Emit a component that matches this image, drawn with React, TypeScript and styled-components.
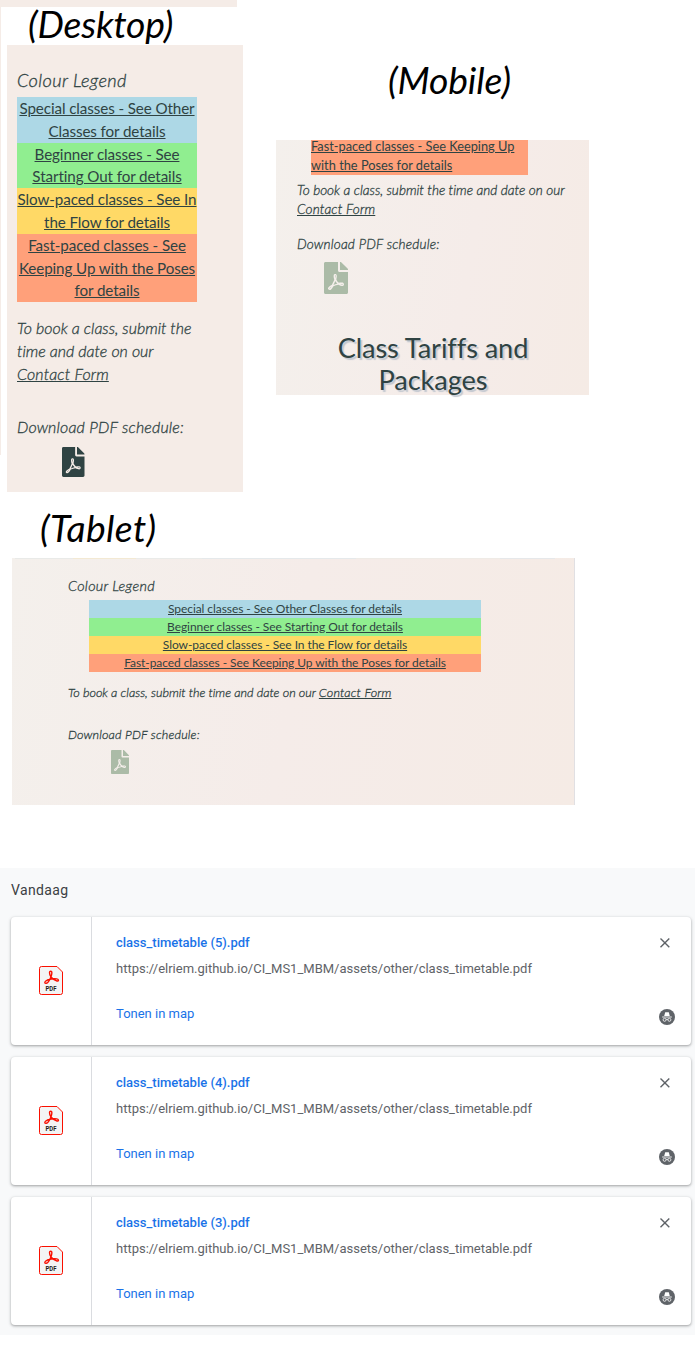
import React from "react";
import styled, { createGlobalStyle } from "styled-components";
import { FaFilePdf } from "react-icons/fa";

const GlobalStyle = createGlobalStyle`
  * { box-sizing: border-box; }
  body { margin: 0; background: #fff; }
`;

const Page = styled.main`
  width: 696px;
  height: 1348px;
  overflow: hidden;
  display: flex;
  flex-direction: column;
  background: #fff;
  font-family: Lato, "Liberation Sans", sans-serif;
  font-variant-ligatures: none;
  color: #2f4343;
`;

const Previews = styled.section`
  display: flex;
  height: 492px;
`;

const DesktopColumn = styled.div`
  width: 276px;
`;

const EdgeStrip = styled.div`
  width: 237px;
  height: 7px;
  background: #f5ece7;
`;

const DesktopRow = styled.div`
  display: flex;
  gap: 6px;
`;

const EdgeLine = styled.div`
  width: 1px;
  height: 448px;
  background: #f5ece7;
`;

const DeviceTitle = styled.h2<{ $height: number; $line: number; $indent: number; $spacing?: number }>`
  margin: 0;
  height: ${(p) => p.$height}px;
  line-height: ${(p) => p.$line}px;
  padding-left: ${(p) => p.$indent}px;
  font-size: 37.33px;
  font-weight: 400;
  font-style: italic;
  color: #000;
  white-space: nowrap;
  letter-spacing: ${(p) => p.$spacing ?? 0}px;
`;

const DesktopPanel = styled.div`
  width: 236px;
  height: 447px;
  padding: 21px 0 0 10px;
  background: #f5ece7;
`;

const MobilePanel = styled.div`
  width: 313px;
  height: 255px;
  padding: 0 0 0 21px;
  background: linear-gradient(100deg, #f4f0ec, #f5ece9 60%, #f5ebe5);
`;

const TabletSection = styled.section`
  height: 376px;
`;

const TabletPanel = styled.div`
  width: 563px;
  height: 247px;
  margin-left: 12px;
  border-right: 1px solid #e1e0e3;
  background: linear-gradient(100deg, #f4f0ec, #f5ece9 50%, #f5ebe5);
`;

const TableEdge = styled.div`
  display: flex;
  height: 1px;
  margin-left: 3px;
  width: 540px;
`;

const TableEdgeCell = styled.div<{ $width: number; $color: string }>`
  width: ${(p) => p.$width}px;
  background: ${(p) => p.$color};
`;

const TabletBody = styled.div`
  padding: 16px 0 0 56px;
`;

const Heading = styled.h3<{ $size: number; $line: number; $spacing?: number; $gap?: number }>`
  margin: 0 0 ${(p) => p.$gap ?? 0}px;
  font-size: ${(p) => p.$size}px;
  line-height: ${(p) => p.$line}px;
  font-weight: 300;
  -webkit-text-stroke: 0.3px currentColor;
  font-style: italic;
  letter-spacing: ${(p) => p.$spacing ?? 0}px;
`;

const Legend = styled.div<{ $width: number; $size: number; $line: number; $indent?: number; $left?: boolean; $spacing?: number }>`
  width: ${(p) => p.$width}px;
  margin-left: ${(p) => p.$indent ?? 0}px;
  font-size: ${(p) => p.$size}px;
  line-height: ${(p) => p.$line}px;
  text-align: ${(p) => (p.$left ? "left" : "center")};
  letter-spacing: ${(p) => p.$spacing ?? 0}px;
  white-space: nowrap;
`;

const LegendItem = styled.div<{ $color: string }>`
  background: ${(p) => p.$color};
  text-decoration: underline;
`;

const ShortLine = styled.div`
  line-height: 13.2px;
  margin-bottom: 2.6px;
`;

const Note = styled.p<{ $size: number; $line: number; $top: number; $spacing?: number }>`
  margin: ${(p) => p.$top}px 0 0;
  font-size: ${(p) => p.$size}px;
  line-height: ${(p) => p.$line}px;
  font-weight: 300;
  -webkit-text-stroke: 0.3px currentColor;
  font-style: italic;
  white-space: nowrap;
  letter-spacing: ${(p) => p.$spacing ?? 0}px;
`;

const Link = styled.span`
  text-decoration: underline;
  letter-spacing: 0.15px;
`;

const PdfGlyph = styled(FaFilePdf)<{ $height: number; $left: number; $top: number; $color: string }>`
  display: block;
  width: ${(p) => p.$height * 0.75}px;
  height: ${(p) => p.$height}px;
  margin: ${(p) => p.$top}px 0 0 ${(p) => p.$left}px;
  color: ${(p) => p.$color};
`;

const TariffHeading = styled.h2`
  margin: 38px 20px 0 0;
  font-size: 27.2px;
  line-height: 32px;
  font-weight: 400;
  letter-spacing: -0.1px;
  text-align: center;
  text-shadow: 2px 2px 1px #c3c8d0;
`;

const Downloads = styled.section`
  width: 695px;
  height: 467px;
  padding: 0 4px 0 11px;
  background: #f8f9fa;
  font-family: Roboto, "Liberation Sans", sans-serif;
`;

const DayLabel = styled.div`
  height: 49px;
  line-height: 45px;
  font-size: 14px;
  letter-spacing: 0.35px;
  color: #3c4043;
`;

const CardList = styled.div`
  display: flex;
  flex-direction: column;
  gap: 12px;
`;

const Card = styled.article`
  display: flex;
  height: 128px;
  border-radius: 4px;
  background: #fff;
  box-shadow: 0 1px 2px rgba(60, 64, 67, 0.3), 0 1px 3px 1px rgba(60, 64, 67, 0.15);
`;

const FileIconPane = styled.div`
  width: 81px;
  display: flex;
  align-items: center;
  justify-content: center;
  padding-bottom: 1px;
  border-right: 1px solid #dadce0;
`;

const CardText = styled.div`
  flex: 1;
  padding: 16px 0 0 24px;
  font-size: 13px;
  line-height: 20px;
`;

const FileName = styled.div`
  font-weight: 500;
  color: #1a73e8;
`;

const FileUrl = styled.div`
  margin-top: 6px;
  color: #5f6368;
`;

const ShowInFolder = styled.div`
  margin-top: 25px;
  color: #1a73e8;
`;

const CardActions = styled.div`
  width: 32px;
  padding: 20px 0;
  display: flex;
  flex-direction: column;
  justify-content: space-between;
`;

const COLORS = { special: "#add8e6", beginner: "#90ee90", slow: "#ffd966", fast: "#ffa07a" };

const PdfFileIcon = () => (
  <svg width="24" height="29" viewBox="0 0 24 29" fill="none">
    <path d="M2.5 .5H18L23.5 6V26.5a2 2 0 0 1-2 2H2.5a2 2 0 0 1-2-2V2.5a2 2 0 0 1 2-2Z" fill="#f4f4f4" stroke="#fa0f00" />
    <path
      d="M11.8 10.7C10.3 8 10 5.2 11.7 5.2s1.3 3 .2 5.7c-1 2.5-2.8 6-4.7 6.4-1.6.2-2-1.2-.4-2.3 2.5-1.7 8-2.8 11-2.1 2.4.6 2 2.5.1 2.1-2.2-.4-4.6-2.3-6.1-4.3Z"
      stroke="#fa0f00"
      strokeWidth="1.4"
      strokeLinejoin="round"
    />
    <text x="12" y="25.2" textAnchor="middle" fontFamily="Roboto, sans-serif" fontSize="6.5" fontWeight="700" fill="#1c1c1c" textLength="11" lengthAdjust="spacingAndGlyphs">
      PDF
    </text>
  </svg>
);

const CloseIcon = () => (
  <svg width="12" height="12" viewBox="0 0 12 12" fill="none" stroke="#5f6368" strokeWidth="1.4">
    <path d="M1.5 1.5 10.3 10.3M10.3 1.5 1.5 10.3" />
  </svg>
);

const IncognitoIcon = () => (
  <svg width="16" height="16" viewBox="0 0 16 16">
    <circle cx="8" cy="8" r="8" fill="#5f6368" />
    <path d="M6.2 3.2h3.6L10.8 7H5.2Z" fill="#fff" />
    <path d="M3.2 8h9.6" stroke="#fff" strokeWidth=".9" />
    <g fill="none" stroke="#fff" strokeWidth=".8">
      <circle cx="5.6" cy="10.8" r="1.5" />
      <circle cx="10.4" cy="10.8" r="1.5" />
      <path d="M7 10.5q1-.7 2 0" />
    </g>
  </svg>
);

const DownloadCard = ({ index }: { index: number }) => (
  <Card>
    <FileIconPane>
      <PdfFileIcon />
    </FileIconPane>
    <CardText>
      <FileName>class_timetable ({index}).pdf</FileName>
      <FileUrl>https://elriem.github.io/CI_MS1_MBM/assets/other/class_timetable.pdf</FileUrl>
      <ShowInFolder>Tonen in map</ShowInFolder>
    </CardText>
    <CardActions>
      <CloseIcon />
      <IncognitoIcon />
    </CardActions>
  </Card>
);

const MobileColumn = styled.div`
  width: 313px;
  padding-top: 56px;
`;

export default function App() {
  return (
    <Page>
      <GlobalStyle />
      <Previews>
        <DesktopColumn>
          <EdgeStrip />
          <DesktopRow>
            <EdgeLine />
            <div>
              <DeviceTitle $height={38} $line={34} $indent={21} $spacing={-0.2}>(Desktop)</DeviceTitle>
              <DesktopPanel>
                <Heading $size={18.2} $line={29} $spacing={0.38} $gap={2}>Colour Legend</Heading>
                <Legend $width={180} $size={15.2} $line={22.8} $spacing={-0.1}>
                  <LegendItem $color={COLORS.special}>Special classes - See Other<br />Classes for details</LegendItem>
                  <LegendItem $color={COLORS.beginner}>Beginner classes - See<br />Starting Out for details</LegendItem>
                  <LegendItem $color={COLORS.slow}>Slow-paced classes - See In<br />the Flow for details</LegendItem>
                  <LegendItem $color={COLORS.fast}>Fast-paced classes - See<br />Keeping Up with the Poses<br />for details</LegendItem>
                </Legend>
                <Note $size={16} $line={22.8} $top={15}>
                  To book a class, submit the<br />time and date on our<br /><Link>Contact Form</Link>
                </Note>
                <Note $size={16} $line={22.8} $top={30} $spacing={0.17}>Download PDF schedule:</Note>
                <PdfGlyph $height={30} $left={45} $top={8.6} $color="#2f4343" />
              </DesktopPanel>
            </div>
          </DesktopRow>
        </DesktopColumn>
        <MobileColumn>
          <DeviceTitle $height={84} $line={48} $indent={112} $spacing={-0.15}>(Mobile)</DeviceTitle>
          <MobilePanel>
            <Legend $width={217} $size={12.8} $line={19.2} $indent={14} $left>
              <LegendItem $color={COLORS.fast}>
                <ShortLine>Fast-paced classes - See Keeping Up</ShortLine>
                <div>with the Poses for details</div>
              </LegendItem>
            </Legend>
            <Note $size={13.6} $line={19.2} $top={6}>
              To book a class, submit the time and date on our<br /><Link>Contact Form</Link>
            </Note>
            <Note $size={13.6} $line={19.2} $top={15.6} $spacing={0.18}>Download PDF schedule:</Note>
            <PdfGlyph $height={32} $left={27} $top={7.4} $color="#abbba7" />
            <TariffHeading>Class Tariffs and<br />Packages</TariffHeading>
          </MobilePanel>
        </MobileColumn>
      </Previews>
      <TabletSection>
        <DeviceTitle $height={66} $line={72} $indent={40} $spacing={0.35}>(Tablet)</DeviceTitle>
        <TabletPanel>
          <TableEdge>
            <TableEdgeCell $width={58} $color="#e9eae8" />
            <TableEdgeCell $width={63} $color="#f3e9d3" />
            <TableEdgeCell $width={66} $color="#eaebe9" />
            <TableEdgeCell $width={154} $color="#e5e9eb" />
            <TableEdgeCell $width={144} $color="#efebe6" />
            <TableEdgeCell $width={55} $color="#e6e8ea" />
          </TableEdge>
          <TabletBody>
            <Heading $size={14.4} $line={22} $spacing={0.3} $gap={2.5}>Colour Legend</Heading>
            <Legend $width={392} $size={12} $line={18} $indent={21} $spacing={-0.07}>
              <LegendItem $color={COLORS.special}>Special classes - See Other Classes for details</LegendItem>
              <LegendItem $color={COLORS.beginner}>Beginner classes - See Starting Out for details</LegendItem>
              <LegendItem $color={COLORS.slow}>Slow-paced classes - See In the Flow for details</LegendItem>
              <LegendItem $color={COLORS.fast}>Fast-paced classes - See Keeping Up with the Poses for details</LegendItem>
            </Legend>
            <Note $size={12.6} $line={18} $top={12.5}>
              To book a class, submit the time and date on our <Link>Contact Form</Link>
            </Note>
            <Note $size={12.6} $line={18} $top={24} $spacing={0.15}>Download PDF schedule:</Note>
            <PdfGlyph $height={24} $left={43} $top={6} $color="#abbba7" />
          </TabletBody>
        </TabletPanel>
      </TabletSection>
      <Downloads>
        <DayLabel>Vandaag</DayLabel>
        <CardList>
          {[5, 4, 3].map((n) => (
            <DownloadCard key={n} index={n} />
          ))}
        </CardList>
      </Downloads>
    </Page>
  );
}
